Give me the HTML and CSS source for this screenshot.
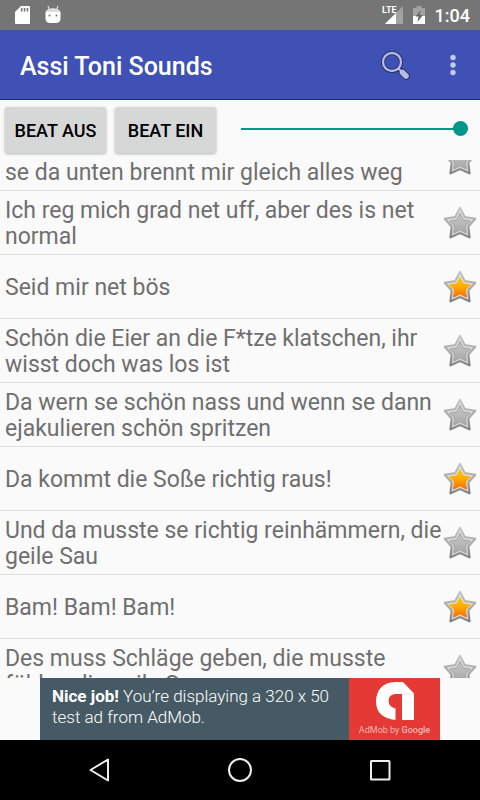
FILE: index.html
```html
<!DOCTYPE html>
<html lang="de">
<head>
    <meta charset="UTF-8">
    <meta name="viewport" content="width=device-width, initial-scale=1.0">
    <title>Assi Toni Sounds</title>
    <link rel="stylesheet" href="styles.css">
</head>
<body>

    <!-- Shared star shape and gradients -->
    <svg class="defs" width="0" height="0" aria-hidden="true">
        <defs>
            <linearGradient id="rim" x1="0" y1="0" x2="0" y2="1">
                <stop offset="0" stop-color="#e4e4e4"/>
                <stop offset="1" stop-color="#d0d0d0"/>
            </linearGradient>
            <linearGradient id="edge" x1="0" y1="0" x2="0" y2="1">
                <stop offset="0" stop-color="#c6c6c6"/>
                <stop offset="0.5" stop-color="#a8a8a8"/>
                <stop offset="1" stop-color="#7c7c7c"/>
            </linearGradient>
            <linearGradient id="grey" x1="0" y1="0" x2="0" y2="1">
                <stop offset="0" stop-color="#c8c8c8"/>
                <stop offset="1" stop-color="#a8a8a8"/>
            </linearGradient>
            <linearGradient id="gold" x1="0" y1="0" x2="0" y2="1">
                <stop offset="0" stop-color="#ffc800"/>
                <stop offset="0.5" stop-color="#ffaa00"/>
                <stop offset="1" stop-color="#ff6a00"/>
            </linearGradient>
            <path id="outer" d="M18 2.8 L22.8 12 L33.4 13.8 L26.4 21.4 L27.6 32.4 L18 28.2 L8.4 32.4 L9.6 21.4 L2.6 13.8 L13.2 12 Z"/>
            <path id="inner" d="M18 8.5 L21.2 14.8 L28.4 16 L23.4 21 L24.4 28 L18 24.8 L11.6 28 L12.6 21 L7.6 16 L14.8 14.8 Z"/>
            <symbol id="star-off" viewBox="0 0 36 36">
                <use href="#outer" fill="url(#rim)" stroke="url(#edge)" stroke-width="2" stroke-linejoin="round"/>
                <use href="#inner" fill="url(#grey)" stroke="#a4a4a4" stroke-width="1" stroke-linejoin="round"/>
            </symbol>
            <symbol id="star-on" viewBox="0 0 36 36">
                <use href="#outer" fill="url(#rim)" stroke="url(#edge)" stroke-width="2" stroke-linejoin="round"/>
                <use href="#inner" fill="url(#gold)" stroke="url(#gold)" stroke-width="1" stroke-linejoin="round"/>
            </symbol>
        </defs>
    </svg>

    <div class="status-bar">
        <svg class="sd-icon" width="16" height="20" viewBox="0 0 16 20">
            <path fill="#fff" d="M6 1 H14 Q15 1 15 2 V18 Q15 19 14 19 H1 Q0 19 0 18 V7 Z"/>
            <path stroke="#757575" stroke-width="1.6" d="M6.7 3 V6.5 M9.6 3 V6.5 M12.5 3 V6.5"/>
        </svg>
        <svg class="debug-icon" width="16" height="20" viewBox="0 0 16 20">
            <path stroke="#ddd" stroke-width="1.2" d="M3 1 L4.5 5 M13 1 L11.5 5"/>
            <path fill="#fff" d="M0.5 7 Q2 3.5 8 3.5 Q14 3.5 15.5 7 V14 Q15 18 11 18 H5 Q1 18 0.5 14 Z"/>
            <path fill="#ddd" d="M1 7 Q2 3.5 8 3.5 Q14 3.5 15 7 Z"/>
            <circle cx="4.5" cy="10.5" r="1" fill="#757575"/>
            <circle cx="11.5" cy="10.5" r="1" fill="#757575"/>
        </svg>
        <span class="network">LTE</span>
        <svg class="signal-icon" width="18" height="18" viewBox="0 0 18 18">
            <path fill="#a3a3a3" d="M18 0 V18 H0 Z"/>
            <path fill="#fff" d="M11 7 V18 H0 Z"/>
        </svg>
        <svg class="battery-icon" width="12" height="18" viewBox="0 0 12 18">
            <path fill="#a3a3a3" d="M3.5 0 H8.5 V2 H12 V10 H0 V2 H3.5 Z"/>
            <path fill="#fff" d="M0 10 H12 V18 H0 Z"/>
            <path fill="#686868" d="M8 4 L2.5 10.5 H5.5 L4.5 16 L10 9 H6.5 Z"/>
        </svg>
        <time>1:04</time>
    </div>

    <header>
        <h1>Assi Toni Sounds</h1>
        <button class="icon-btn" aria-label="Suche">
            <svg width="32" height="32" viewBox="0 0 32 32">
                <g fill="none" stroke-linecap="round">
                    <path stroke="#202858" stroke-width="7.4" d="M23.500 23.500 L27 27"/>
                    <path stroke="#202858" stroke-width="4" d="M19 19 L22 22"/>
                    <circle cx="13" cy="13" r="9" stroke="#202858" stroke-width="4"/>
                    <circle cx="13" cy="13" r="9" stroke="#b5bbe2" stroke-width="2.4"/>
                    <path stroke="#b5bbe2" stroke-width="2.2" d="M19.500 19.500 L22 22"/>
                    <path stroke="#b5bbe2" stroke-width="5.6" d="M23.500 23.500 L27 27"/>
                </g>
            </svg>
        </button>
        <button class="icon-btn" aria-label="Menü">
            <svg width="6" height="22" viewBox="0 0 6 22">
                <g fill="#c5cae9">
                    <circle cx="3" cy="3.5" r="2.7"/>
                    <circle cx="3" cy="11" r="2.7"/>
                    <circle cx="3" cy="18.5" r="2.7"/>
                </g>
            </svg>
        </button>
    </header>

    <div class="controls">
        <button class="beat-btn">BEAT AUS</button>
        <button class="beat-btn">BEAT EIN</button>
        <input type="range" class="volume" min="0" max="100" value="100" aria-label="Lautstärke">
    </div>

    <main>
        <ul class="sound-list">
            <li class="scrolled">
                <p><br>se da unten brennt mir gleich alles weg</p>
                <button class="star" aria-label="Favorit"><svg><use href="#star-off"/></svg></button>
            </li>
            <li>
                <p>Ich reg mich grad net uff, aber des is net normal</p>
                <button class="star" aria-label="Favorit"><svg><use href="#star-off"/></svg></button>
            </li>
            <li>
                <p>Seid mir net bös</p>
                <button class="star" aria-label="Favorit"><svg><use href="#star-on"/></svg></button>
            </li>
            <li>
                <p>Schön die Eier an die F*tze klatschen, ihr wisst doch was los ist</p>
                <button class="star" aria-label="Favorit"><svg><use href="#star-off"/></svg></button>
            </li>
            <li>
                <p>Da wern se schön nass und wenn se dann ejakulieren schön spritzen</p>
                <button class="star" aria-label="Favorit"><svg><use href="#star-off"/></svg></button>
            </li>
            <li>
                <p>Da kommt die Soße richtig raus!</p>
                <button class="star" aria-label="Favorit"><svg><use href="#star-on"/></svg></button>
            </li>
            <li>
                <p>Und da musste se richtig reinhämmern, die geile Sau</p>
                <button class="star" aria-label="Favorit"><svg><use href="#star-off"/></svg></button>
            </li>
            <li>
                <p>Bam! Bam! Bam!</p>
                <button class="star" aria-label="Favorit"><svg><use href="#star-on"/></svg></button>
            </li>
            <li>
                <p>Des muss Schläge geben, die musste fühlen die geile Sau</p>
                <button class="star" aria-label="Favorit"><svg><use href="#star-off"/></svg></button>
            </li>
        </ul>
    </main>

    <a class="ad" href="#ad">
        <span class="ad-text"><b>Nice job!</b> You’re displaying a 320 x 50 test ad from AdMob.</span>
        <span class="ad-logo">
            <svg width="38" height="38" viewBox="0 0 38 38">
                <path fill="#fff" d="M19 0 H27 L38 11.5 V38 H26 V12 H19 Q12.500 13 12.500 19 Q13 25 19.500 26.500 V38 Q0 36 0 19 Q1 1 19 0 Z"/>
                <path fill="#ddd" d="M26 12 L38 11.500 V12.500 H26 Z"/>
            </svg>
            <small>AdMob by <b>Google</b></small>
        </span>
    </a>

    <nav>
        <button aria-label="Zurück">
            <svg width="24" height="26" viewBox="0 0 24 26"><path d="M20 2.500 V23.500 L2.500 13 Z"/></svg>
        </button>
        <button aria-label="Startseite">
            <svg width="26" height="26" viewBox="0 0 26 26"><circle cx="13" cy="13" r="11"/></svg>
        </button>
        <button aria-label="Übersicht">
            <svg width="24" height="24" viewBox="0 0 24 24"><rect x="3" y="3" width="18.500" height="18.500" rx="0.500"/></svg>
        </button>
    </nav>

    <script>
        // Toggle the favourite star of a sound
        document.querySelectorAll('.star').forEach(star => {
            star.addEventListener('click', () => {
                const use = star.querySelector('use');
                const on = use.getAttribute('href') === '#star-on';
                use.setAttribute('href', on ? '#star-off' : '#star-on');
            });
        });
    </script>
</body>
</html>
```
FILE: styles.css
```css
* {
    margin: 0;
    padding: 0;
    box-sizing: border-box;
}

body {
    font-family: Roboto, sans-serif;
    background-color: #fafafa;
    height: 100vh;
    display: flex;
    flex-direction: column;
    overflow: hidden;
}

button {
    font-family: inherit;
    border: none;
    background: none;
    cursor: pointer;
}

svg {
    display: block;
}

.defs {
    position: absolute;
}

.status-bar {
    display: flex;
    align-items: center;
    height: 30px;
    flex-shrink: 0;
    padding: 0 10px 0 15px;
    background-color: #757575;
    color: white;
}

.debug-icon {
    margin-left: 14px;
}

.network {
    margin-left: auto;
    align-self: flex-start;
    padding-top: 5px;
    font-size: 9px;
    font-weight: bold;
    line-height: 10px;
}

.signal-icon {
    margin-left: -12px;
}

.battery-icon {
    margin: 0 10px;
}

time {
    font-size: 18px;
    font-weight: 500;
}

header {
    display: flex;
    align-items: center;
    height: 70px;
    flex-shrink: 0;
    padding: 0 13px 0 20px;
    background-color: #3f51b5;
    border-bottom: 1px solid #0d2ba0;
    color: white;
}

header h1 {
    flex: 1;
    padding-top: 4px;
    font-size: 25px;
    font-weight: 500;
}

.icon-btn {
    display: flex;
    justify-content: center;
    min-width: 28px;
}

.icon-btn + .icon-btn {
    margin-left: 28px;
}

.controls {
    display: flex;
    align-items: center;
    height: 60px;
    flex-shrink: 0;
    padding: 0 12px 0 5px;
}

.beat-btn {
    width: 101px;
    height: 46px;
    margin-right: 9px;
    background-color: #d6d7d7;
    border-radius: 3px;
    box-shadow: 0 1px 3px rgba(0, 0, 0, 0.3);
    font-size: 18px;
    font-weight: 500;
    color: black;
}

.volume {
    appearance: none;
    flex: 1;
    min-width: 0;
    height: 20px;
    margin: 0 0 3px 16px;
    background: linear-gradient(#009688, #009688) center / 100% 2px no-repeat;
}

.volume::-webkit-slider-thumb {
    appearance: none;
    width: 15px;
    height: 15px;
    border-radius: 50%;
    background-color: #009688;
}

main {
    flex: 1;
    min-height: 0;
    overflow: hidden;
}

.sound-list {
    list-style: none;
}

.sound-list li {
    display: flex;
    align-items: center;
    height: 64px;
    padding: 0 2px 0 5px;
    border-bottom: 1px solid #dedede;
}

.sound-list .scrolled {
    margin-top: -33px;
}

.sound-list p {
    flex: 1;
    padding-top: 3px;
    font-size: 23px;
    line-height: 26px;
    color: #6f6f6f;
}

.star svg {
    width: 36px;
    height: 36px;
}

.ad {
    display: flex;
    width: 400px;
    max-width: 100%;
    height: 62px;
    flex-shrink: 0;
    margin: 0 auto;
    background-color: #455a64;
    color: white;
    text-decoration: none;
}

.ad-text {
    flex: 1;
    padding: 8px 8px 0 12px;
    font-size: 17px;
    font-weight: 300;
    line-height: 21px;
}

.ad-text b {
    font-weight: 700;
}

.ad-logo {
    display: flex;
    flex-direction: column;
    align-items: center;
    width: 91px;
    padding-top: 4px;
    background-color: #e53935;
}

.ad-logo small {
    margin-top: 4px;
    font-size: 9px;
    line-height: 12px;
    color: #f7b5b3;
}

.ad-logo b {
    font-weight: 500;
}

nav {
    display: flex;
    justify-content: center;
    align-items: center;
    height: 60px;
    flex-shrink: 0;
    background-color: black;
}

nav button {
    display: flex;
    justify-content: center;
    width: 140px;
}

nav svg {
    fill: none;
    stroke: #eee;
    stroke-width: 2;
    stroke-linejoin: round;
}
```
